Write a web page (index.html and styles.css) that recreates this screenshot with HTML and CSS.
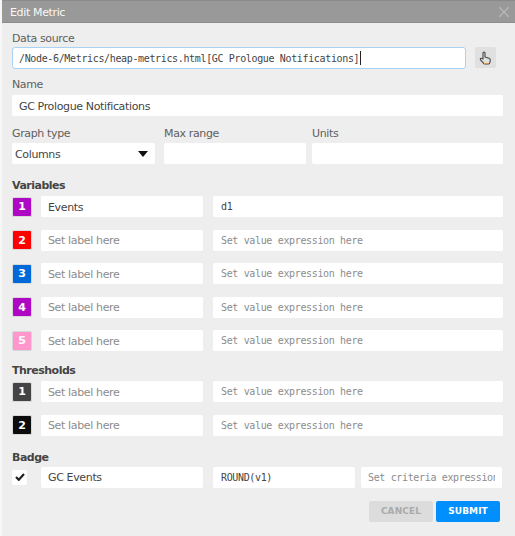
FILE: index.html
```html
<!DOCTYPE html>
<html lang="en">
<head>
  <meta charset="UTF-8">
  <meta name="viewport" content="width=device-width, initial-scale=1.0">
  <title>Edit Metric</title>
  <link rel="stylesheet" href="styles.css">
</head>
<body>
  <div class="dialog">
    <header class="titlebar">
      <span>Edit Metric</span>
      <svg class="close" width="10" height="10" viewBox="0 0 10 10"><path d="M0 0l10 10M10 0L0 10" stroke="#bdbdbd" stroke-width="1.2" fill="none"/></svg>
    </header>

    <form class="content">
      <label class="field-label source-label">Data source</label>
      <div class="source-row">
        <div class="source-input"><span>/Node-6/Metrics/heap-metrics.html[GC Prologue Notifications]</span><i class="caret"></i></div>
        <button type="button" class="pick">
          <svg width="13" height="14" viewBox="0 0 13 14"><path d="M4 8V2a1 1 0 0 1 2 0v4l4 1.2c1 .3 1.4 1 1.3 2l-.4 2.3c-.1.8-.8 1.5-1.6 1.5H6c-.6 0-1.1-.3-1.5-.8L1.5 8.8c-.7-1 .5-2 1.4-1.2z" fill="none" stroke="#444" stroke-width="1.1" stroke-linejoin="round"/><path d="M5 12.5h4.5" stroke="#e0913c" stroke-width="1"/></svg>
        </button>
      </div>

      <label class="field-label name-label">Name</label>
      <input class="box" type="text" value="GC Prologue Notifications">

      <div class="graph-row">
        <div class="col">
          <label class="field-label">Graph type</label>
          <div class="select-wrap">
            <select class="box select"><option>Columns</option></select>
            <i class="arrow"></i>
          </div>
        </div>
        <div class="col">
          <label class="field-label">Max range</label>
          <input class="box" type="text">
        </div>
        <div class="col">
          <label class="field-label">Units</label>
          <input class="box" type="text">
        </div>
      </div>

      <h4 class="section variables">Variables</h4>
      <div class="rows">
        <div class="row">
          <span class="swatch purple">1</span>
          <input class="box" type="text" placeholder="Set label here" value="Events">
          <input class="box mono" type="text" placeholder="Set value expression here" value="d1">
        </div>
        <div class="row">
          <span class="swatch red">2</span>
          <input class="box" type="text" placeholder="Set label here">
          <input class="box mono" type="text" placeholder="Set value expression here">
        </div>
        <div class="row">
          <span class="swatch blue">3</span>
          <input class="box" type="text" placeholder="Set label here">
          <input class="box mono" type="text" placeholder="Set value expression here">
        </div>
        <div class="row">
          <span class="swatch purple">4</span>
          <input class="box" type="text" placeholder="Set label here">
          <input class="box mono" type="text" placeholder="Set value expression here">
        </div>
        <div class="row">
          <span class="swatch pink">5</span>
          <input class="box" type="text" placeholder="Set label here">
          <input class="box mono" type="text" placeholder="Set value expression here">
        </div>
      </div>

      <h4 class="section thresholds">Thresholds</h4>
      <div class="rows">
        <div class="row">
          <span class="swatch gray">1</span>
          <input class="box" type="text" placeholder="Set label here">
          <input class="box mono" type="text" placeholder="Set value expression here">
        </div>
        <div class="row">
          <span class="swatch black">2</span>
          <input class="box" type="text" placeholder="Set label here">
          <input class="box mono" type="text" placeholder="Set value expression here">
        </div>
      </div>

      <h4 class="section badge">Badge</h4>
      <div class="badge-row">
        <span class="check">
          <svg width="10" height="8" viewBox="0 0 10 8"><path d="M1 4l2.8 2.8L9 1" fill="none" stroke="#222" stroke-width="2.2"/></svg>
        </span>
        <input class="box badge-label" type="text" value="GC Events">
        <input class="box mono badge-value" type="text" value="ROUND(v1)">
        <input class="box mono badge-criteria" type="text" placeholder="Set criteria expression here">
      </div>

      <div class="actions">
        <button type="button" class="btn cancel">CANCEL</button>
        <button type="submit" class="btn submit">SUBMIT</button>
      </div>
    </form>
  </div>
</body>
</html>
```
FILE: styles.css
```css
* {
  box-sizing: border-box;
}
html, body {
  margin: 0;
  padding: 0;
  background-color: #fff;
}
.dialog {
  width: 515px;
  height: 536px;
  background-color: #eee;
  border-left: 2px solid #f7f7f7;
  font-family: "DejaVu Sans", sans-serif;
  font-size: 11px;
  letter-spacing: -0.36px;
  color: #555;
  overflow: hidden;
}
.titlebar {
  height: 23px;
  margin-left: -2px;
  padding: 1px 6px 0 10px;
  background-color: #999;
  border-top: 1px solid #8a8a8a;
  border-bottom: 1px solid #8c8c8c;
  color: #f8f8f8;
  display: flex;
  align-items: center;
  justify-content: space-between;
}
.content {
  padding: 0 12px 0 10px;
}
.field-label {
  display: block;
  height: 14px;
  line-height: 16px;
  margin: 10px 0 3px;
  color: #606060;
}
.source-label {
  margin: 8px 0 2px;
}
.name-label {
  margin: 8px 0 4px;
}
.box {
  display: block;
  width: 100%;
  height: 21px;
  padding: 1px 7px 0;
  border: 0;
  border-radius: 2px;
  background-color: #fff;
  font-family: "DejaVu Sans", sans-serif;
  font-size: 11px;
  letter-spacing: -0.36px;
  color: #444;
  outline: none;
}
.box::placeholder {
  color: #8c8c8c;
  opacity: 1;
}
.box.mono {
  padding: 0 8px;
  font-family: "DejaVu Sans Mono", monospace;
  font-size: 10px;
  letter-spacing: -0.35px;
}
.source-row {
  display: flex;
  align-items: flex-start;
}
.source-input {
  width: 454px;
  height: 22px;
  padding: 0 6px;
  display: flex;
  align-items: center;
  background-color: #fff;
  border: 1px solid #a9d3f5;
  border-radius: 3px;
  font-family: "DejaVu Sans Mono", monospace;
  font-size: 10px;
  letter-spacing: -0.35px;
  color: #444;
}
.caret {
  width: 1px;
  height: 14px;
  margin-left: 1px;
  background-color: #222;
}
.pick {
  width: 21px;
  height: 21px;
  margin-left: 9px;
  padding: 0;
  display: flex;
  align-items: center;
  justify-content: center;
  background-color: #e0e0e0;
  border: 0;
  border-radius: 2px;
}
.graph-row {
  display: grid;
  grid-template-columns: 143px 142px 191px;
  column-gap: 9px;
}
.graph-row .col:last-child {
  width: 191px;
  margin-left: -3px;
}
.select-wrap {
  position: relative;
}
.select {
  appearance: none;
  padding: 1px 3px 0;
}
.arrow {
  position: absolute;
  top: 8px;
  right: 7px;
  border-left: 5px solid transparent;
  border-right: 5px solid transparent;
  border-top: 6px solid #111;
}
.section {
  margin: 0;
  height: 14px;
  font-size: 11px;
  font-weight: bold;
  letter-spacing: -0.5px;
  line-height: 16px;
  color: #444;
}
.variables {
  margin-top: 14px;
  margin-bottom: 4px;
}
.thresholds {
  margin-top: 12px;
  margin-bottom: 4px;
}
.badge {
  margin-top: 14px;
  margin-bottom: 3px;
}
.rows {
  display: grid;
  row-gap: 12.5px;
}
.row {
  display: grid;
  grid-template-columns: 20px 162px 290px;
  column-gap: 9px;
  align-items: center;
}
.row .box:last-child {
  margin-left: 1px;
}
.swatch {
  width: 20px;
  height: 20px;
  display: flex;
  align-items: center;
  justify-content: center;
  border: 1px solid #d8d8d8;
  border-radius: 2px;
  color: #fff;
  font-weight: bold;
  font-size: 11px;
}
.purple { background-color: #ae08c4; }
.red { background-color: #fe0000; }
.blue { background-color: #0069d9; }
.pink { background-color: #ff96cc; }
.gray { background-color: #444; }
.black { background-color: #0c0c0c; }
.badge-row {
  display: flex;
  align-items: center;
}
.check {
  width: 15px;
  height: 15px;
  margin-right: 14px;
  display: flex;
  align-items: center;
  justify-content: center;
  background-color: #fff;
  border-radius: 2px;
}
.badge-label {
  width: 162px;
  margin-right: 10px;
}
.badge-value {
  width: 142px;
  margin-right: 6px;
}
.box.badge-criteria {
  width: 141px;
  padding: 0 7px;
}
.actions {
  margin-top: 13px;
  padding-right: 3px;
  display: flex;
  justify-content: flex-end;
  gap: 3px;
}
.btn {
  width: 64px;
  height: 21px;
  padding: 0;
  border: 0;
  border-radius: 2px;
  font-family: "DejaVu Sans", sans-serif;
  font-size: 9px;
  font-weight: 600;
  letter-spacing: 0.1px;
}
.cancel {
  background-color: #dcdcdc;
  color: #aaa;
}
.submit {
  background-color: #008ffc;
  color: #fff;
}
```
